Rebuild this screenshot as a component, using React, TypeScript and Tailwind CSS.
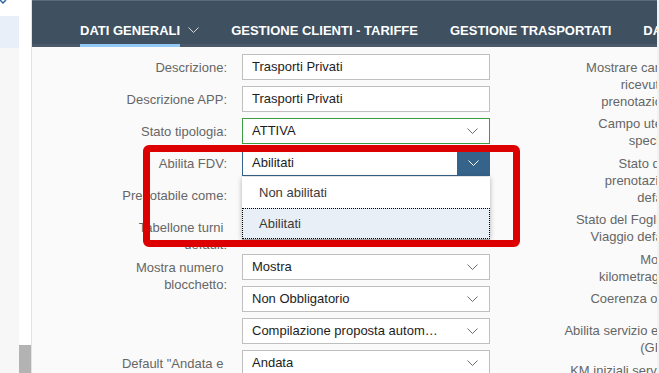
import React from 'react';

const Chevron: React.FC<{ className?: string }> = ({ className }) => (
    <svg className={className} width="11" height="6" viewBox="0 0 11 6" fill="none" stroke="currentColor" strokeWidth="1">
        <polyline points="0.5,0.5 5.5,5.5 10.5,0.5" />
    </svg>
);

const TextInput: React.FC<{ value: string }> = ({ value }) => (
    <div className="h-[26px] border border-[#bfbfbf] bg-white pl-[9px] flex items-center text-[13px] text-[#1d1d1d]">
        {value}
    </div>
);

const Select: React.FC<{ value?: string; border?: string }> = ({ value = '', border = 'border-[#bfbfbf]' }) => (
    <div className={`h-[26px] border ${border} bg-white pl-[9px] pr-[11px] flex items-center text-[13px] text-[#1d1d1d]`}>
        <span className="flex-1 min-w-0 max-w-[192px] truncate">{value}</span>
        <Chevron className="ml-auto flex-none text-[#6a6d70]" />
    </div>
);

const FormRow: React.FC<{ label?: React.ReactNode; children: React.ReactNode }> = ({ label, children }) => (
    <div className="flex items-start mb-[6px]">
        <div className="w-[115px] flex-none text-right text-[13px] leading-[17px] text-[#666666] mt-[4.5px] -mb-[4.5px] whitespace-nowrap">
            {label}
        </div>
        <div className="ml-[15px] w-[248px] flex-none flex flex-col gap-[6px]">{children}</div>
    </div>
);

const SideLabel: React.FC<{ children: React.ReactNode }> = ({ children }) => (
    <div className="min-h-[32px] pt-[4.5px] pb-[1px] text-right text-[13px] leading-[17px] text-[#666666] whitespace-nowrap">
        {children}
    </div>
);

const tabs = ['GESTIONE CLIENTI - TARIFFE', 'GESTIONE TRASPORTATI', 'DATI AGGIUNTIVI'];

export default function App() {
    return (
        <div className="relative w-[659px] h-[373px] overflow-hidden flex bg-[#fafafa]" style={{ fontFamily: '"Liberation Sans", Arial, sans-serif' }}>
            {/* left list + scrollbar */}
            <div className="w-[32px] flex-none flex border-r border-[#e3e3e3]">
                <div className="w-[19px] flex-none flex flex-col bg-[#f7f7f7]">
                    <div className="h-[16px] bg-white">
                        <svg width="8" height="4" viewBox="0 0 8 4" className="block">
                            <path d="M0 0 L3 3 L6 0" fill="none" stroke="#2f6aa3" strokeWidth="1.5" />
                        </svg>
                    </div>
                    <div className="h-[32px] bg-[#e8eff8]" />
                </div>
                <div className="flex-1 bg-white flex flex-col justify-end">
                    <div className="h-[28px] bg-[#b3b3b3]" />
                </div>
            </div>

            {/* main */}
            <div className="w-[625px] flex-none overflow-hidden flex flex-col">
                <div className="h-[47px] flex-none bg-[#3f5060] border-t border-[#5c6b7a] shadow-[inset_0_-3px_0_#4a5a6b] flex items-end pl-[48px] gap-[32px] text-white text-[13px] font-bold whitespace-nowrap">
                    <div className="flex items-end flex-none">
                        <div className="flex flex-col">
                            <span className="leading-[17px] mb-[5px]">DATI GENERALI</span>
                            <div className="h-[3px] bg-[#91c8f6]" />
                        </div>
                        <Chevron className="ml-[8px] mb-[14px] text-[#d5dbe1]" />
                    </div>
                    {tabs.map(t => (
                        <div key={t} className="flex flex-col flex-none">
                            <span className="leading-[17px] mb-[8px]">{t}</span>
                        </div>
                    ))}
                </div>

                <div className="flex pt-[7px] pl-[80px]">
                    <div className="w-[378px] flex-none flex flex-col">
                        <FormRow label="Descrizione:">
                            <TextInput value="Trasporti Privati" />
                        </FormRow>
                        <FormRow label="Descrizione APP:">
                            <TextInput value="Trasporti Privati" />
                        </FormRow>
                        <FormRow label="Stato tipologia:">
                            <Select value="ATTIVA" border="border-[#3a9d3e]" />
                        </FormRow>
                        <FormRow label="Abilita FDV:">
                            <div className="relative z-[5]">
                                <div className="h-[26px] border border-[#366389] bg-white pl-[9px] flex items-center text-[13px] text-[#1d1d1d]">
                                    <span className="flex-1">Abilitati</span>
                                    <div className="w-[32px] h-full bg-[#366389] flex items-center justify-center">
                                        <Chevron className="text-white" />
                                    </div>
                                </div>
                                <div className="absolute left-0 top-full mt-[1px] w-full bg-white shadow-[0_1px_5px_rgba(0,0,0,0.3)] text-[13px] text-[#3a3a3a]">
                                    <div className="h-[31px] pl-[17px] flex items-center">Non abilitati</div>
                                    <div className="h-[31px] pl-[16px] flex items-center bg-[#e8eff6] border border-dotted border-black">Abilitati</div>
                                </div>
                            </div>
                        </FormRow>
                        <FormRow label="Prenotabile come:">
                            <Select value="Privato" />
                        </FormRow>
                        <FormRow label={<>Tabellone turni&nbsp;<br />default:</>}>
                            <Select value="Standard" />
                        </FormRow>
                        <FormRow label={<>Mostra numero&nbsp;<br />blocchetto:</>}>
                            <Select value="Mostra" />
                            <Select value="Non Obbligatorio" />
                            <Select value="Compilazione proposta automatica del numero" />
                        </FormRow>
                        <FormRow label={<>Default "Andata e&nbsp;<br />ritorno":</>}>
                            <Select value="Andata" />
                        </FormRow>
                    </div>

                    <div className="w-[174px] ml-[16px] flex-none flex flex-col">
                        <SideLabel>Mostrare campo<br />ricevuta di<br />prenotazione:</SideLabel>
                        <SideLabel>Campo utente<br />speciale:</SideLabel>
                        <SideLabel>Stato della<br />prenotazione<br />default:</SideLabel>
                        <SideLabel>Stato del Foglio di<br />Viaggio default:</SideLabel>
                        <SideLabel>Mostra<br />kilometraggio:</SideLabel>
                        <SideLabel>Coerenza orari:</SideLabel>
                        <SideLabel>Abilita servizio extra<br />(GPS):</SideLabel>
                        <SideLabel>KM iniziali servizio:</SideLabel>
                    </div>
                </div>
            </div>

            <div className="w-[2px] flex-none bg-[#f2f2f2]" />

            {/* annotation */}
            <div className="absolute left-[143px] top-[145px] w-[377px] h-[102px] border-[7px] border-[#dc0000] rounded-[6px] z-10" />
        </div>
    );
}
